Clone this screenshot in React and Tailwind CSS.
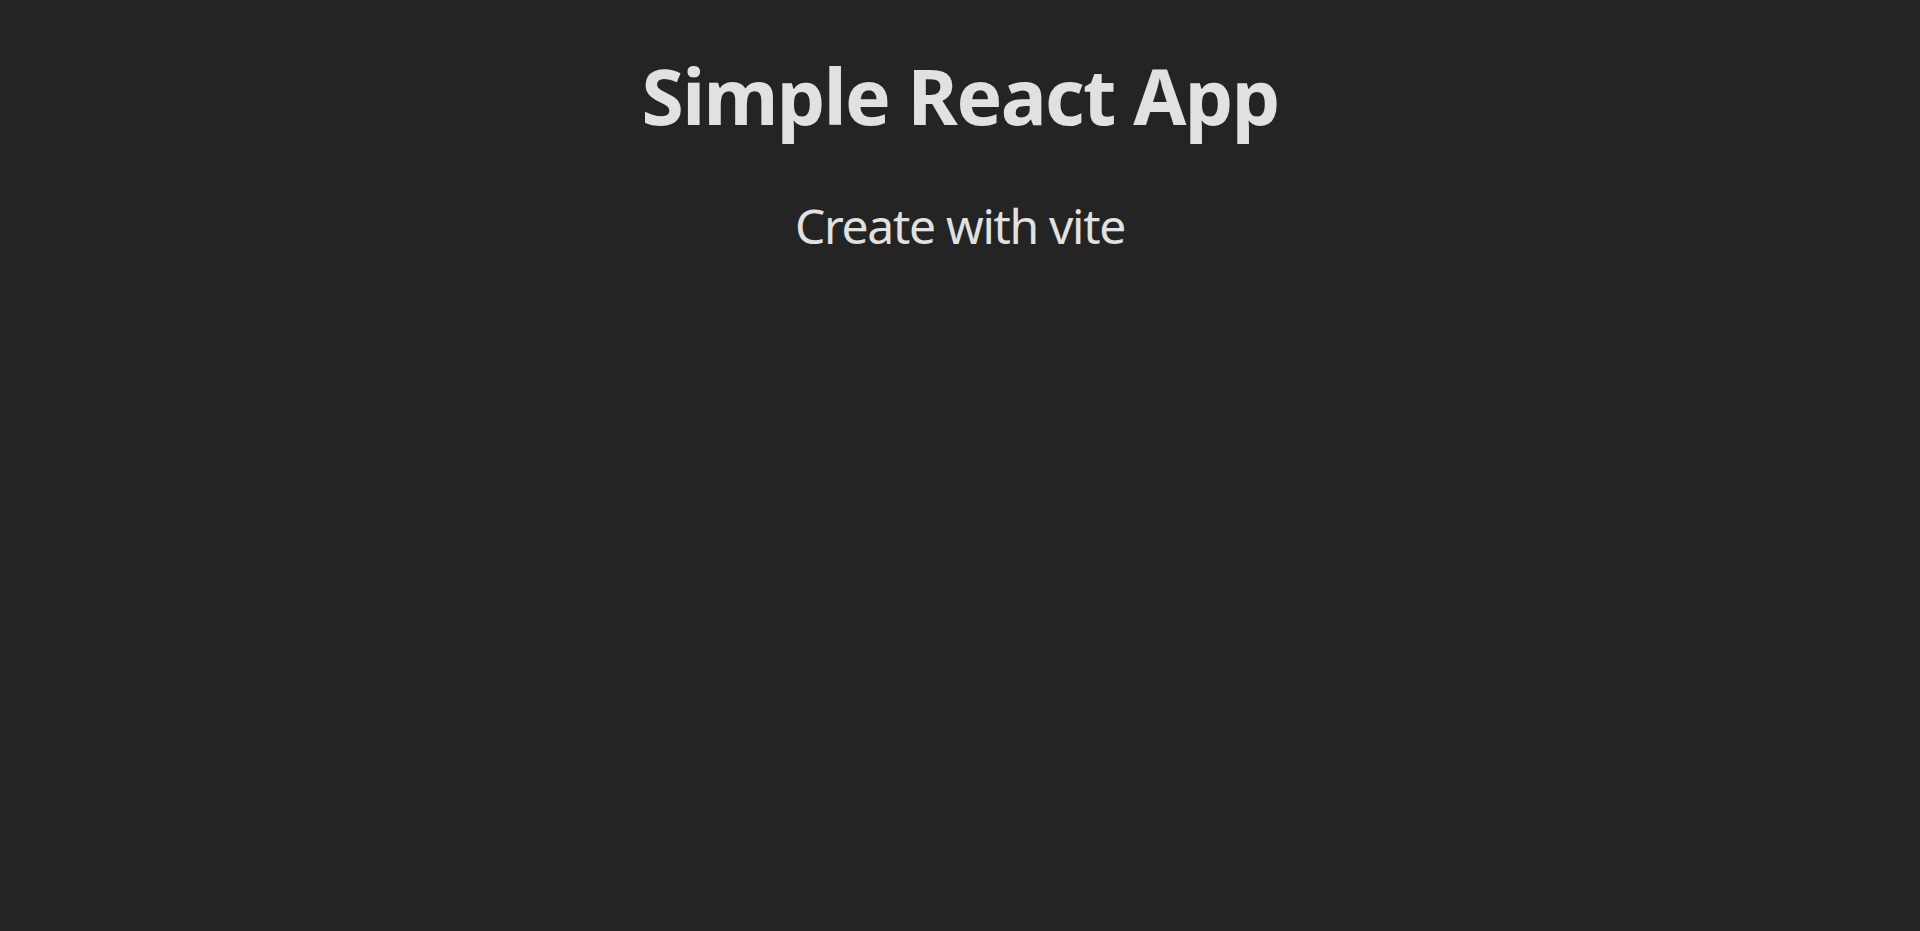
import React from 'react';

const App = () => {
  return (
    <div className="min-h-screen w-full bg-[#242424] text-[#e1e1e1] font-['Noto_Sans',sans-serif]">
      <div className="flex flex-col items-center pt-[54px]">
        {/* Heading */}
        <h1 className="text-[76.8px] font-bold leading-[1.1] tracking-[-1.6px]">Simple React App</h1>
        <p className="mt-[52px] text-[48px] leading-[1.5] tracking-[-1.3px]">Create with vite</p>
      </div>
    </div>
  );
};

export default App;
